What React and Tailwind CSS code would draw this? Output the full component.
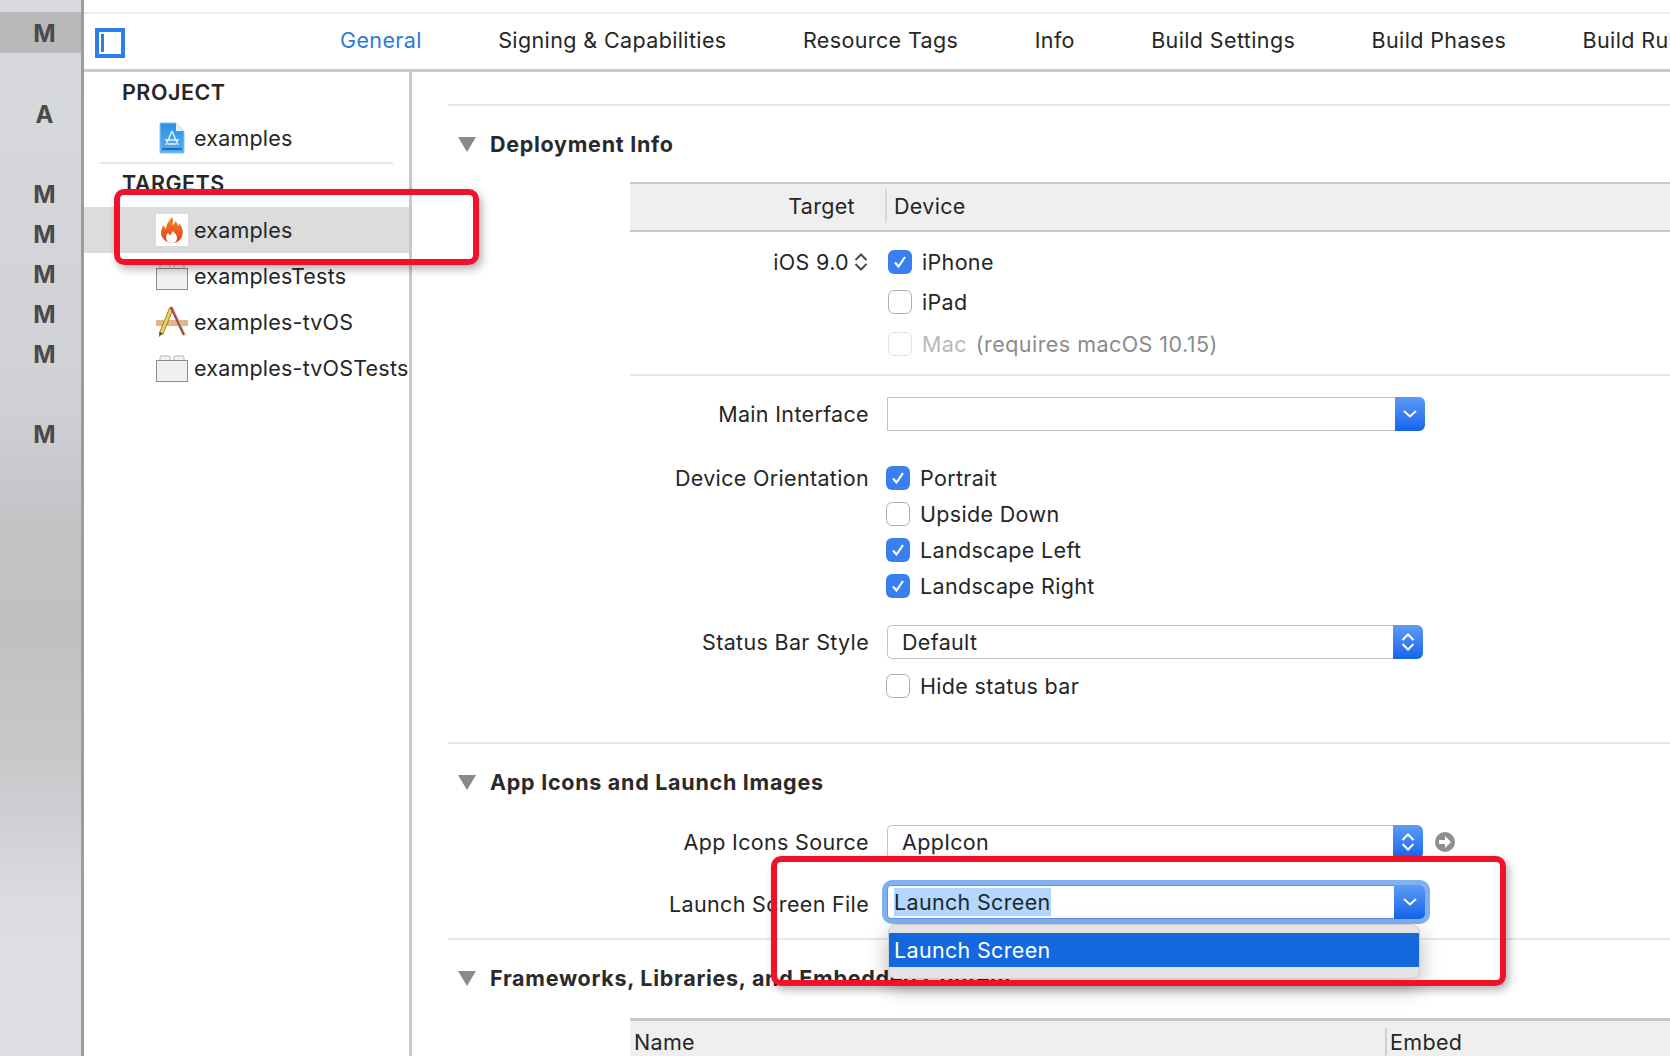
import React from 'react';

const tabs = ['General', 'Signing & Capabilities', 'Resource Tags', 'Info', 'Build Settings', 'Build Phases', 'Build Rules'];
const letters = [
    { ch: 'A', y: 'mt-[51px]' },
    { ch: 'M', y: 'mt-[58px]' },
    { ch: 'M', y: 'mt-[18px]' },
    { ch: 'M', y: 'mt-[18px]' },
    { ch: 'M', y: 'mt-[18px]' },
    { ch: 'M', y: 'mt-[18px]' },
    { ch: 'M', y: 'mt-[58px]' },
];

const AppDocIcon = () => (
    <svg width="26" height="32" viewBox="0 0 26 32">
        <defs>
            <linearGradient id="docBlue" x1="0" y1="0" x2="0" y2="1">
                <stop offset="0" stopColor="#2f8fe6" />
                <stop offset="1" stopColor="#55b0f2" />
            </linearGradient>
        </defs>
        <path d="M1 1h16l8 8v22H1z" fill="url(#docBlue)" stroke="#8cc4f0" />
        <path d="M17 1v8h8z" fill="#e4f1fb" />
        <rect x="3" y="26" width="20" height="2" fill="#1c6fc0" />
        <path d="M13 9l-6 14M13 9l6 14M6 18h14M9 22h8" stroke="#e8f4fd" strokeWidth="1.4" fill="none" />
    </svg>
);

const FlameIcon = () => (
    <div className="w-[32px] h-[32px] bg-white flex items-center justify-center">
        <svg width="24" height="28" viewBox="0 0 24 28">
            <defs>
                <linearGradient id="flame" x1="0" y1="0" x2="0" y2="1">
                    <stop offset="0" stopColor="#f58a24" />
                    <stop offset="1" stopColor="#e8381a" />
                </linearGradient>
            </defs>
            <path d="M12 1c2 4 1 6 0 8 2-1 3-2 3-4 2 2 3 3 3 5 1-1 1-2 1-3 3 4 5 8 3 13-1 4-5 7-9 7-6 0-11-4-12-9 0-4 1-7 3-9 0 2 1 3 2 4 0-5 3-8 6-12z" fill="url(#flame)" />
            <path d="M12 27c-4 0-6-3-6-6 0-2 1-3 2-4 1 2 2 2 3 2 0-2 1-3 2-4 1 2 4 3 4 7 0 3-2 5-5 5z" fill="#fff" />
        </svg>
    </div>
);

const BundleIcon = () => (
    <svg width="32" height="27" viewBox="0 0 32 27">
        <path d="M4 6V2l1-1h8l1 1v4M18 6V2l1-1h8l1 1v4" fill="#f2f2f2" stroke="#b5b5b5" />
        <rect x="0.5" y="5.5" width="31" height="21" fill="#f0f0f0" stroke="#8d8d8d" />
    </svg>
);

const XcodeIcon = () => (
    <svg width="32" height="32" viewBox="0 0 32 32">
        <rect x="0" y="14" width="32" height="6" fill="#dcb98c" />
        <path d="M15.5 2L5 28" stroke="#8a6a20" strokeWidth="4.5" />
        <path d="M15.5 2L5 28" stroke="#f0d24a" strokeWidth="3" />
        <path d="M3 31l.6-5 3.2 1.2z" fill="#444" />
        <path d="M15 1l13 28" stroke="#a8452f" strokeWidth="2.5" />
        <path d="M17 2l13 28" stroke="#c4c4c4" strokeWidth="1" />
    </svg>
);

const DownChevron = () => (
    <svg width="14" height="8" viewBox="0 0 14 8">
        <path d="M1 1l6 5.5L13 1" stroke="#fff" strokeWidth="2" fill="none" />
    </svg>
);

const UpDown = ({ color = '#fff', w = 14 }) => (
    <svg width={w} height="20" viewBox="0 0 14 20">
        <path d="M1.5 8L7 2.5 12.5 8M1.5 12L7 17.5 12.5 12" stroke={color} strokeWidth="2" fill="none" />
    </svg>
);

const SideRow = ({ icon, label, selected, className = '' }) => (
    <div className={`flex items-center h-[46px] pl-[72px] ${selected ? 'bg-[#dcdcdc]' : ''} ${className}`}>
        <div className="w-[32px] flex items-center justify-center">{icon}</div>
        <span className="ml-[6px] whitespace-nowrap tracking-[0.2px]">{label}</span>
    </div>
);

const Check = ({ on, faded }) => (
    <div className={`w-[24px] h-[24px] rounded-[6px] flex items-center justify-center shrink-0 ${on ? 'bg-[#3a7ff0]' : faded ? 'border border-[#e0e0e0] bg-white' : 'border border-[#b0b0b0] bg-white'}`}>
        {on && (
            <svg width="16" height="16" viewBox="0 0 16 16">
                <path d="M3 8.5l3.5 4L13 3" stroke="#fff" strokeWidth="2.2" fill="none" />
            </svg>
        )}
    </div>
);

const CheckRow = ({ on, label, className = '' }) => (
    <div className={`flex items-center gap-[10px] ${className}`}>
        <Check on={on} />
        <span>{label}</span>
    </div>
);

const FormRow = ({ label, children, className = '', labelClassName = '' }) => (
    <div className={`flex items-center ${className}`}>
        <div className={`w-[439px] pr-[18px] text-right whitespace-nowrap ${labelClassName}`}>{label}</div>
        {children}
    </div>
);

const Select = ({ value, width, updown, rounded = 'rounded-l-[5px]' }) => (
    <div className="flex h-[34px]" style={{ width }}>
        <div className={`flex-1 bg-white border border-[#c4c4c4] border-r-0 pl-[14px] flex items-center ${rounded}`}>{value}</div>
        <div className="w-[30px] rounded-r-[6px] bg-gradient-to-b from-[#5c9bf7] to-[#1463ec] flex items-center justify-center">
            {updown ? <UpDown /> : <DownChevron />}
        </div>
    </div>
);

const SectionTitle = ({ children, className = '' }) => (
    <div className={`flex items-center font-bold text-[#2a2a2a] tracking-[0.72px] ${className}`}>
        <svg width="18" height="15" viewBox="0 0 18 15" className="ml-[10px]">
            <path d="M0 0h18L9 15z" fill="#8a8a8a" />
        </svg>
        <span className="ml-[14px] whitespace-nowrap">{children}</span>
    </div>
);

export default function App() {
    return (
        <div className="relative w-[1670px] h-[1056px] overflow-hidden flex bg-white text-[#262626] text-[21.5px] leading-[26px] tracking-[0.33px]" style={{ fontFamily: 'Inter, "Liberation Sans", sans-serif' }}>
            {/* left strip */}
            <div className="w-[84px] shrink-0 border-r-[3px] border-[#9c9c9f] bg-[linear-gradient(180deg,#d8dadd_0%,#cfd1d5_38%,#c3c3c6_50%,#c1bfc1_60%,#c8c8cb_72%,#dcdde1_86%,#dfe0e4_100%)] flex flex-col items-center font-bold text-[24px] text-[#4a4a4a]">
                <div className="w-full h-[41px] mt-[12px] pl-[8px] pt-[2px] bg-[#b9b9bb] flex items-center justify-center">M</div>
                {letters.map((l, i) => (
                    <div key={i} className={`h-[22px] leading-[22px] ml-[8px] ${l.y}`}>{l.ch}</div>
                ))}
            </div>

            <div className="flex-1 min-w-0 flex flex-col">
                {/* tab bar */}
                <div className="h-[60px] shrink-0 border-t-[2px] mt-[12px] border-[#ececec] border-b-[3px] border-b-[#c9c9c9] flex">
                    <div className="w-[30px] h-[30px] border-[4px] border-[#2b7de9] ml-[11px] mt-[14px] pl-[2px] py-[2px] shrink-0">
                        <div className="w-[3px] h-full bg-[#2b7de9]" />
                    </div>
                    <div className="flex gap-[76.3px] ml-[215px] mt-[13px] whitespace-nowrap tracking-[0.38px]">
                        {tabs.map((t, i) => (
                            <span key={t} className={i === 0 ? 'text-[#2b7bd8]' : ''}>{t}</span>
                        ))}
                    </div>
                </div>

                <div className="flex-1 min-h-0 flex">
                    {/* sidebar */}
                    <div className="w-[328px] shrink-0 border-r-[3px] border-[#c9c9c9] pt-[7px]">
                        <div className="pl-[38px] font-semibold h-[26px] tracking-[0.5px]">PROJECT</div>
                        <SideRow icon={<AppDocIcon />} label="examples" className="mt-[10px]" />
                        <div className="h-[2px] bg-[#e4e4e4] mx-[16px] mt-[1px]" />
                        <div className="pl-[38px] font-semibold h-[26px] mt-[6px] tracking-[0.5px]">TARGETS</div>
                        <SideRow icon={<FlameIcon />} label="examples" selected className="mt-[11px]" />
                        <SideRow icon={<BundleIcon />} label="examplesTests" />
                        <SideRow icon={<XcodeIcon />} label="examples-tvOS" />
                        <SideRow icon={<BundleIcon />} label="examples-tvOSTests" />
                    </div>

                    {/* main */}
                    <div className="flex-1 min-w-0 pl-[36px] pt-[32px]">
                        <div className="h-[2px] bg-[#e8e8e8]" />
                        <SectionTitle className="h-[26px] mt-[25px]">Deployment Info</SectionTitle>

                        <div className="ml-[182px] mt-[25px] h-[50px] pb-[2px] bg-[#efefef] border-t-[2px] border-b-[2px] border-[#c8c8c8] flex items-center">
                            <div className="w-[255px] pr-[30px] text-right">Target</div>
                            <div className="w-[2px] h-[34px] bg-[#d8d8d8]" />
                            <div className="pl-[7px]">Device</div>
                        </div>

                        <div className="ml-[182px] pt-[17px] border-b-[2px] border-[#e8e8e8] h-[144px]">
                            <div className="flex items-center h-[26px]">
                                <div className="w-[238px] flex justify-end items-center">
                                    iOS 9.0
                                    <span className="ml-[5px] flex"><UpDown color="#4a4a4a" /></span>
                                </div>
                                <div className="ml-[20px]"><CheckRow on label="iPhone" /></div>
                            </div>
                            <div className="ml-[258px] mt-[14px]"><CheckRow label="iPad" /></div>
                            <div className="ml-[258px] mt-[16px] flex items-center gap-[10px] text-[#8b8b8b]">
                                <Check faded />
                                <span className="text-[#b9b9b9]">Mac</span>
                                <span className="-ml-[1px] tracking-[0.45px]">(requires macOS 10.15)</span>
                            </div>
                        </div>

                        <FormRow label="Main Interface" className="mt-[21px]">
                            <Select width={538} rounded="" />
                        </FormRow>

                        <FormRow label="Device Orientation" className="mt-[29px] h-[36px]">
                            <CheckRow on label="Portrait" className="-ml-[1px]" />
                        </FormRow>
                        <div className="ml-[438px] flex flex-col">
                            <CheckRow label="Upside Down" className="h-[36px]" />
                            <CheckRow on label="Landscape Left" className="h-[36px]" />
                            <CheckRow on label="Landscape Right" className="h-[36px]" />
                        </div>

                        <FormRow label="Status Bar Style" className="mt-[21px]">
                            <Select value="Default" width={536} updown />
                        </FormRow>
                        <div className="ml-[438px] mt-[14px]"><CheckRow label="Hide status bar" /></div>

                        <div className="h-[2px] bg-[#e8e8e8] mt-[43px]" />
                        <SectionTitle className="h-[26px] mt-[25px]">App Icons and Launch Images</SectionTitle>

                        <FormRow label="App Icons Source" className="mt-[30px]">
                            <Select value="AppIcon" width={536} updown />
                            <svg width="22" height="22" viewBox="0 0 22 22" className="ml-[11px]">
                                <circle cx="11" cy="11" r="10" fill="#8e8e8e" />
                                <path d="M5 9h6V5l6 6-6 6v-4H5z" fill="#fff" />
                            </svg>
                        </FormRow>

                        <FormRow label="Launch Screen File" className="mt-[26px]" labelClassName="pt-[4px]">
                            <div className="flex h-[34px] w-[538px] rounded-[5px] ring-[5px] ring-[#82b1f2]">
                                <div className="flex-1 bg-white border-y border-l border-[#5c93e8] pl-[6px] flex items-center rounded-l-[4px]">
                                    <span className="bg-[#b3d7ff] h-[28px] leading-[28px]">Launch Screen</span>
                                </div>
                                <div className="w-[31px] rounded-r-[5px] bg-gradient-to-b from-[#5c9bf7] to-[#1463ec] flex items-center justify-center">
                                    <DownChevron />
                                </div>
                            </div>
                        </FormRow>

                        <div className="h-[2px] bg-[#e8e8e8] mt-[19px]" />
                        <SectionTitle className="h-[26px] mt-[25px]">Frameworks, Libraries, and Embedded Content</SectionTitle>

                        <div className="ml-[182px] mt-[27px] h-[38px] bg-[#efefef] border-t-[3px] border-[#c8c8c8] flex items-start pt-[8px]">
                            <div className="w-[755px] pl-[4px] h-[26px]">Name</div>
                            <div className="w-[2px] h-[28px] -mt-[1px] bg-[#d0d0d0]" />
                            <div className="pl-[3px]">Embed</div>
                        </div>
                    </div>
                </div>
            </div>

            {/* dropdown menu open over the form */}
            <div className="absolute left-[888px] top-[924px] w-[532px] h-[55px] rounded-[8px] bg-[#e4e4e4] border border-[#cfcfcf] shadow-[0_8px_22px_rgba(0,0,0,0.28)] flex items-center overflow-hidden">
                <div className="w-full h-[34px] mb-[4px] bg-[#1368de] text-white pl-[5px] leading-[34px]">Launch Screen</div>
            </div>

            {/* red annotation boxes */}
            <div className="absolute left-[114px] top-[189px] w-[365px] h-[76px] rounded-[10px] border-[6px] border-[#f0122a] shadow-[3px_4px_8px_rgba(0,0,0,0.3)]" />
            <div className="absolute left-[771px] top-[856px] w-[735px] h-[130px] rounded-[10px] border-[6px] border-[#f0122a] shadow-[3px_4px_8px_rgba(0,0,0,0.3)]" />
        </div>
    );
}
